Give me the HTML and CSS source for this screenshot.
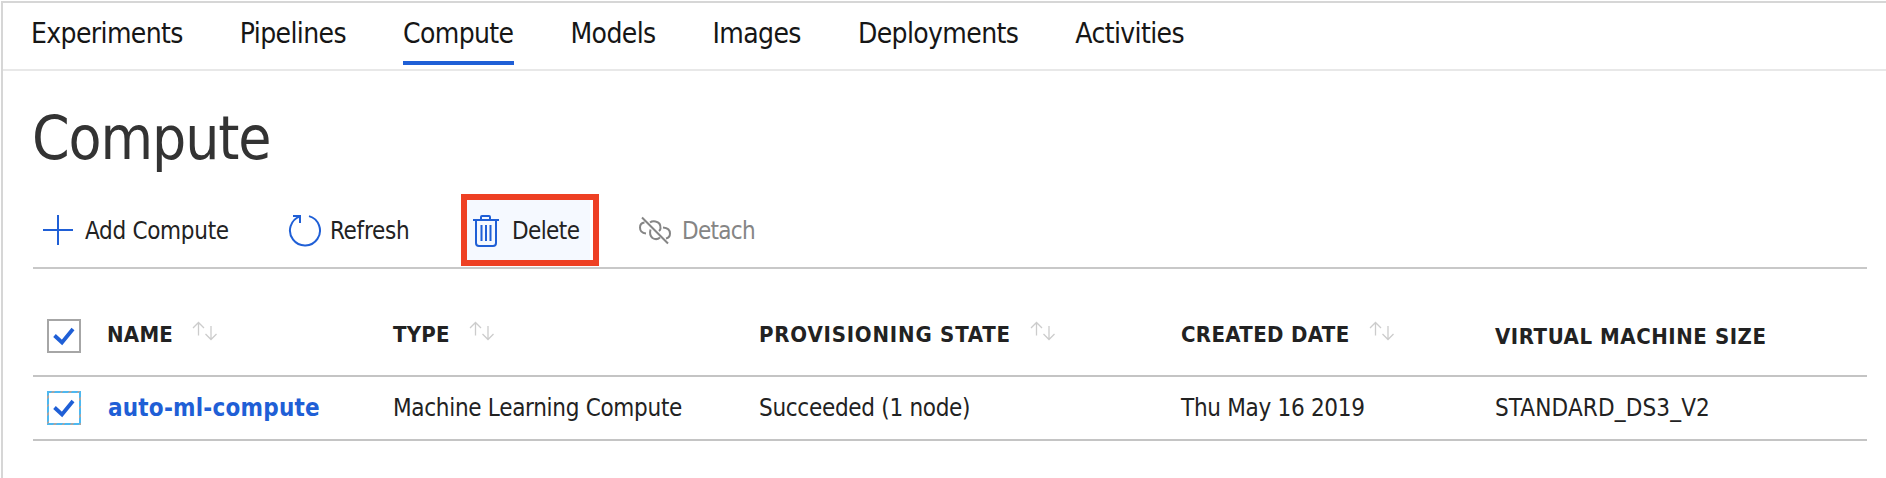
FILE: index.html
```html
<!DOCTYPE html>
<html lang="en">
<head>
<meta charset="utf-8">
<title>Compute</title>
<link rel="stylesheet" href="styles.css">
</head>
<body>
<svg class="sprite" aria-hidden="true">
  <symbol id="sort" viewBox="0 0 26 20"><path d="M6.5 14.5V1.5M1 7l5.500-5.500L12 7M19 5V18.500M13.500 13L19 18.500l5.500-5.500"/></symbol>
  <symbol id="check" viewBox="0 0 30 30"><path d="M5.500 14.500L13 21.500 24 8"/></symbol>
</svg>
<div class="page">
  <nav class="tabs">
    <a class="tab">Experiments</a>
    <a class="tab">Pipelines</a>
    <a class="tab active">Compute</a>
    <a class="tab">Models</a>
    <a class="tab">Images</a>
    <a class="tab">Deployments</a>
    <a class="tab">Activities</a>
  </nav>
  <main class="content">
    <h1 class="title">Compute</h1>
    <div class="toolbar">
      <button class="tool add"><svg class="icon" viewBox="0 0 32 32"><path d="M1 16H31M16 1V31"/></svg><span>Add Compute</span></button>
      <button class="tool refresh"><svg class="icon" viewBox="0 0 34 34"><path d="M21 3.100A15 15 0 1 1 12 3.400M5 3H12V10"/></svg><span>Refresh</span></button>
      <button class="tool delete"><svg class="icon" viewBox="0 0 28 34"><path d="M1 7H27M9 7V4Q9 3 10 3H17Q18 3 18 4V7M4 7V30Q4 33 7 33H21Q24 33 24 30V7M9.500 12V28M14 12V28M18.500 12V28"/></svg><span>Delete</span></button>
      <button class="tool detach"><svg class="icon" viewBox="0 0 34 30"><path d="M4 2.500L30 28.500M8 18.500Q2 18 2 12.500Q2 8 6.500 7.500M12 7.500Q14 6 17.500 6.500Q23 7.500 22.500 13.500Q22.300 15 21 16M25 12.500Q32 13 32 18.500Q32 22.500 28 23.500M12.500 14.500Q11 20 14.500 23Q18.500 25.500 22 22.500"/></svg><span>Detach</span></button>
    </div>
    <div class="table">
      <div class="row head">
        <span class="box"><svg><use href="#check"/></svg></span>
        <div class="cell name"><span>NAME</span><svg class="sort"><use href="#sort"/></svg></div>
        <div class="cell type"><span>TYPE</span><svg class="sort"><use href="#sort"/></svg></div>
        <div class="cell state"><span>PROVISIONING STATE</span><svg class="sort"><use href="#sort"/></svg></div>
        <div class="cell date"><span>CREATED DATE</span><svg class="sort"><use href="#sort"/></svg></div>
        <div class="cell size"><span>VIRTUAL MACHINE SIZE</span></div>
      </div>
      <div class="row data">
        <span class="box focused"><svg><use href="#check"/></svg></span>
        <a class="cell name">auto-ml-compute</a>
        <div class="cell type">Machine Learning Compute</div>
        <div class="cell state">Succeeded (1 node)</div>
        <div class="cell date">Thu May 16 2019</div>
        <div class="cell size">STANDARD_DS3_V2</div>
      </div>
    </div>
  </main>
</div>
</body>
</html>
```
FILE: styles.css
```css
* { box-sizing: border-box; }
body {
  margin: 0;
  background: #fff;
  color: #222;
  font-family: Tahoma, "DejaVu Sans Condensed", "DejaVu Sans", sans-serif;
  font-stretch: condensed;
  overflow: hidden;
}
.sprite { display: none; }
.page {
  height: 477px;
  margin: 1px 0 0 1px;
  border-top: 2px solid #d6d6d6;
  border-left: 2px solid #d6d6d6;
}
.tabs {
  display: flex;
  gap: 57px;
  height: 68px;
  padding-left: 28px;
  border-bottom: 2px solid #e8e8e8;
}
.tab {
  height: 62px;
  font-size: 28px;
  line-height: 62px;
  letter-spacing: -0.62px;
  color: #161616;
  white-space: nowrap;
}
.active { border-bottom: 4px solid #1f5fd6; }
.content { padding: 0 19px 0 30px; }
.title {
  height: 123px;
  margin: 0 0 0 -1px;
  font-size: 60px;
  font-weight: 400;
  line-height: 134px;
  letter-spacing: -1.1px;
  color: #333;
}
.toolbar {
  display: flex;
  height: 75px;
  border-bottom: 2px solid #c8c8c8;
}
.tool {
  display: flex;
  align-items: center;
  height: 72px;
  margin: 0;
  padding: 0;
  border: 0;
  background: none;
  color: #222;
  font: inherit;
  font-size: 24px;
  letter-spacing: -0.3px;
  white-space: nowrap;
}
.tool span { padding-top: 1px; }
.icon { flex: none; fill: none; stroke: #1f5fd6; stroke-width: 2; }
.add { width: 246px; padding-left: 9px; }
.add .icon { width: 32px; height: 32px; margin-right: 11px; }
.refresh { width: 182px; padding-left: 9px; }
.refresh .icon { width: 34px; height: 34px; margin-right: 8px; }
.delete {
  width: 138px;
  padding-left: 5px;
  border: 6px solid #ee4023;
  background: linear-gradient(to right, #f5f9ff 123px, #fff 123px);
  letter-spacing: -0.6px;
}
.delete .icon { width: 28px; height: 34px; margin-right: 12px; }
.detach { padding-left: 39px; color: #858585; letter-spacing: -0.7px; }
.detach .icon { width: 34px; height: 30px; margin-right: 10px; stroke: #858585; }
.row {
  display: grid;
  grid-template-columns: 75px 285px 366px 422px 314px 1fr;
  border-bottom: 2px solid #c4c4c4;
}
.head { height: 108px; font-size: 22px; font-weight: 700; line-height: 30px; padding-top: 50px; }
.data { height: 64px; font-size: 24px; line-height: 30px; padding-top: 14px; letter-spacing: -0.3px; }
.cell { white-space: nowrap; }
.head .cell { display: flex; padding-top: 1px; letter-spacing: 0.25px; }
.head .name { margin-left: -1px; }
.head .state { letter-spacing: 0.8px; }
.head .date { letter-spacing: 0.35px; }
.head .size { padding-top: 3px; letter-spacing: 0.55px; }
.data .cell { padding-top: 2px; }
.data .name { color: #1f5fd6; font-weight: 700; letter-spacing: 0.2px; }
.data .size { letter-spacing: 0.15px; }
.sort { width: 26px; height: 20px; margin: 1px 0 0 19px; fill: none; stroke: #ccc; stroke-width: 1.3; }
.box { width: 34px; height: 34px; margin-left: 14px; border: 2px solid #a6a6a6; }
.box svg { display: block; width: 30px; height: 30px; fill: none; stroke: #1f5fd6; stroke-width: 3.8; }
.focused {
  padding: 2px;
  border: 0;
  background:
    linear-gradient(#fff, #fff) center / 30px 30px no-repeat,
    repeating-linear-gradient(135deg, #4db8f0 0 4.200px, #a6a6a6 4.200px 6px);
}
```
